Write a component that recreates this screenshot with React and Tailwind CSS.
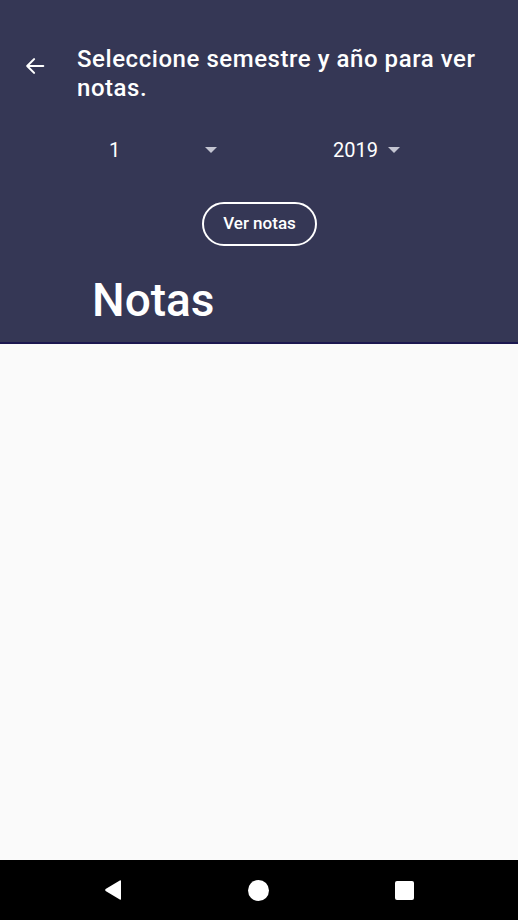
import React from 'react';

const App = () => {
  return (
    <div className="w-[518px] h-[920px] flex flex-col bg-[#fafafa] font-['Roboto',sans-serif]">
      {/* Header */}
      <div className="bg-[#353755] border-b-2 border-[#1c1850] h-[344px] flex flex-col shrink-0">
        <div className="flex pt-[45px] pl-[24px] pr-[20px]">
          <svg width="22" height="22" viewBox="0 0 24 24" className="mt-[10px] shrink-0" fill="none" stroke="white" strokeWidth="2.3" strokeLinecap="round" strokeLinejoin="round">
            <path d="M21 12H3.5M11 4.5L3.5 12L11 19.5" />
          </svg>
          <h1 className="ml-[31px] text-white text-[24px] tracking-[0.55px] font-medium leading-[29px]">
            Seleccione semestre y año para ver notas.
          </h1>
        </div>

        <div className="flex mt-[32px] h-[30px] items-center">
          <div className="flex items-center w-[108px] ml-[109px]">
            <span className="text-white text-[20px] flex-1">1</span>
            <span className="w-0 h-0 border-l-[6px] border-r-[6px] border-t-[6px] border-l-transparent border-r-transparent border-t-[#c4c5d2]" />
          </div>
          <div className="flex items-center ml-[116px]">
            <span className="text-white text-[20px]">2019</span>
            <span className="ml-[10px] w-0 h-0 border-l-[6px] border-r-[6px] border-t-[6px] border-l-transparent border-r-transparent border-t-[#c4c5d2]" />
          </div>
        </div>

        <div className="flex justify-center mt-[37px] pl-[1px]">
          <button className="w-[115px] h-[44px] rounded-full border-2 border-white text-white text-[17px] font-medium">
            Ver notas
          </button>
        </div>

        <h2 className="ml-[92px] mt-[24px] text-white text-[46px] font-medium leading-[60px]">
          Notas
        </h2>
      </div>

      <div className="flex-1" />

      {/* Android nav bar */}
      <div className="h-[60px] bg-black flex items-center pl-[104px] shrink-0">
        <svg width="18" height="22" viewBox="0 0 18 22">
          <path d="M17 2.2 L17 19.8 Q17 21.2 15.8 20.4 L1.6 12.1 Q0.6 11 1.6 9.9 L15.8 1.6 Q17 0.8 17 2.2Z" fill="white" />
        </svg>
        <div className="ml-[126px] w-[21px] h-[21px] rounded-full bg-white" />
        <div className="ml-[126px] w-[19px] h-[19px] rounded-[2px] bg-white" />
      </div>
    </div>
  );
};

export default App;
